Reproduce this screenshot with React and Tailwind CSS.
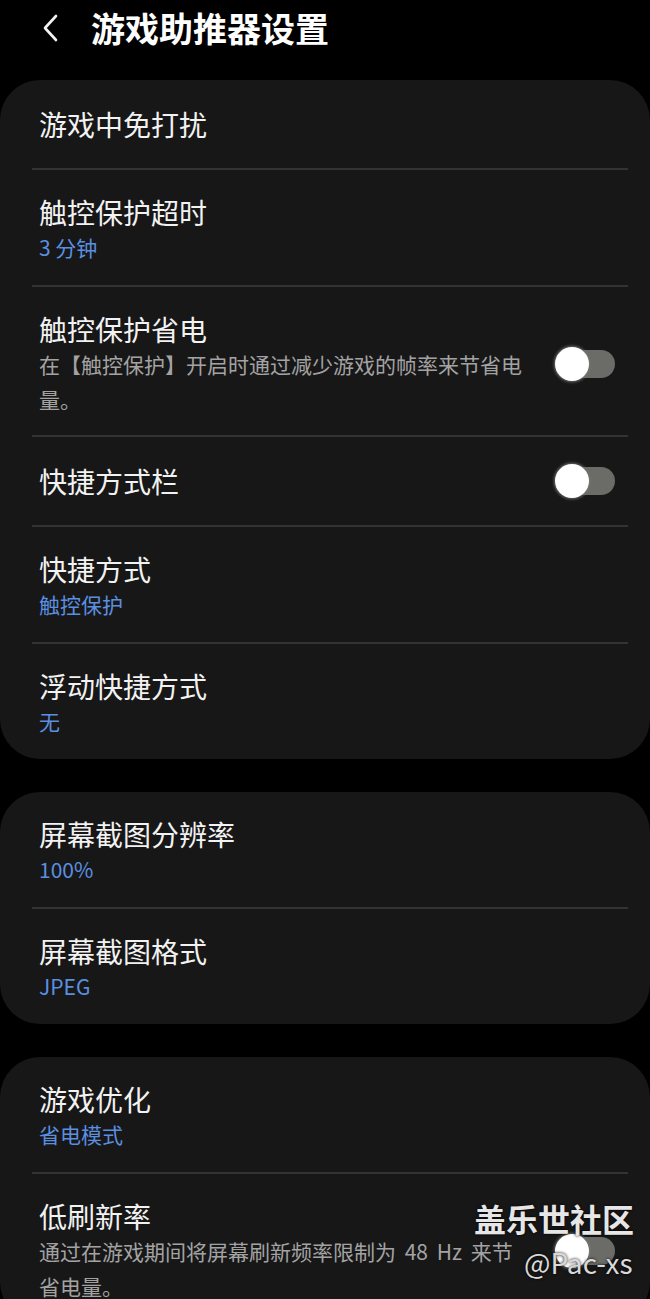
import React from "react";

const font = { fontFamily: '"Noto Sans CJK SC", "Noto Sans", sans-serif' };

function Toggle() {
  return (
    <div className="relative w-[60px] h-[34px] shrink-0">
      <div className="absolute left-[14px] right-0 top-[3px] bottom-[3px] rounded-full bg-[#6b6b67]" />
      <div className="absolute left-0 top-0 w-[34px] h-[34px] rounded-full bg-white shadow-[0_0_3px_1px_rgba(120,120,120,0.9)]" />
    </div>
  );
}

function Divider() {
  return <div className="ml-8 mr-[22px] h-[2px] bg-[#333333]" />;
}

function Row({ title, value, desc, toggle }) {
  let pad = "pt-[24px] pb-[21px]";
  if (!value && !desc) pad = "py-[26px]";
  if (desc) pad = "pt-[24px] pb-[18px]";
  return (
    <div className={`flex items-center pl-[39px] pr-[35px] ${pad}`}>
      <div className="flex-1">
        <div className="text-[28px] leading-[36px] text-[#f2f2f2]">{title}</div>
        {value && <div className="text-[21px] leading-[34px] text-[#5b8fe0]">{value}</div>}
        {desc && (
          <div className="text-[21px] leading-[35px] text-[#a3a3a3] w-[486px] whitespace-pre-line [word-spacing:4px]">
            {desc}
          </div>
        )}
      </div>
      {toggle && <Toggle />}
    </div>
  );
}

function Card({ rows }) {
  return (
    <div className="bg-[#171717] rounded-[40px]">
      {rows.map((r, i) => (
        <div key={r.title}>
          {i > 0 && <Divider />}
          <Row {...r} />
        </div>
      ))}
    </div>
  );
}

export default function App() {
  const card1 = [
    { title: "游戏中免打扰" },
    { title: "触控保护超时", value: "3 分钟" },
    { title: "触控保护省电", desc: "在【触控保护】开启时通过减少游戏的帧率来节省电\n量。", toggle: true },
    { title: "快捷方式栏", toggle: true },
    { title: "快捷方式", value: "触控保护" },
    { title: "浮动快捷方式", value: "无" },
  ];
  const card2 = [
    { title: "屏幕截图分辨率", value: "100%" },
    { title: "屏幕截图格式", value: "JPEG" },
  ];
  const card3 = [
    { title: "游戏优化", value: "省电模式" },
    { title: "低刷新率", desc: "通过在游戏期间将屏幕刷新频率限制为 48 Hz 来节\n省电量。", toggle: true },
  ];

  return (
    <div className="relative w-[650px] h-[1299px] overflow-hidden bg-black" style={font}>
      <div className="h-[80px] flex items-start pt-[7px]">
        <svg className="ml-[40px] mt-[6px]" width="20" height="30" viewBox="0 0 20 30" fill="none">
          <path d="M16 3 L5 15 L16 27" stroke="#f2f2f2" strokeWidth="2.6" strokeLinecap="round" strokeLinejoin="round" />
        </svg>
        <div className="ml-[31px] text-[34px] leading-[42px] font-bold text-white">游戏助推器设置</div>
      </div>
      <div className="flex flex-col gap-[33px]">
        <Card rows={card1} />
        <Card rows={card2} />
        <Card rows={card3} />
      </div>
      <div className="absolute left-[474px] top-[1198px] text-[32px] leading-[40px] font-bold text-[#e6e6e6] [text-shadow:0_0_3px_#000]">
        盖乐世社区
      </div>
      <div className="absolute left-[524px] top-[1244px] text-[28px] leading-[36px] text-[#d9d9d9] [text-shadow:0_0_3px_#000]">
        @Pac-xs
      </div>
    </div>
  );
}
